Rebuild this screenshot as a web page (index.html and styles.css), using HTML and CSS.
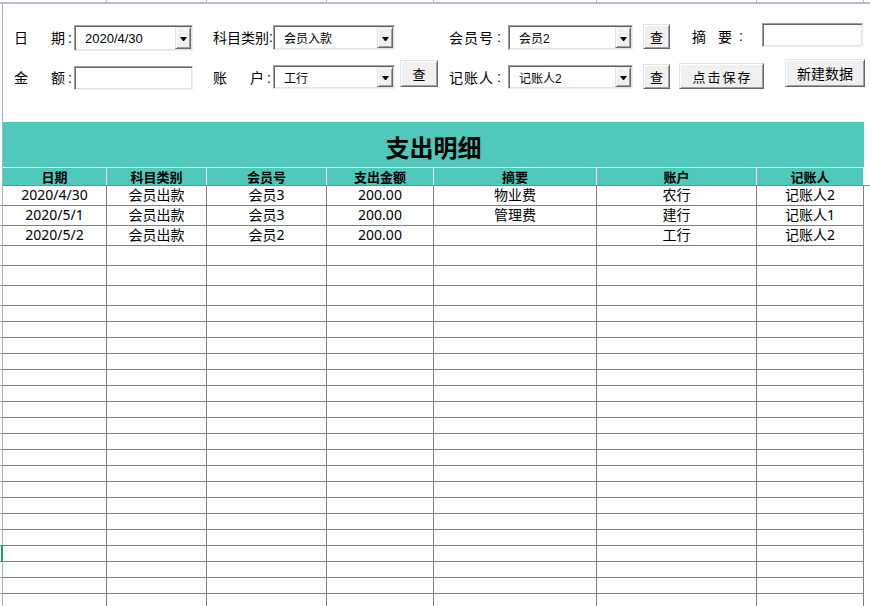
FILE: index.html
```html
<!DOCTYPE html>
<html lang="zh-CN">
<head>
<meta charset="utf-8">
<title>支出明细</title>
<link rel="stylesheet" href="styles.css">
</head>
<body>
<div class="colticks"><span></span><span></span><span></span><span></span><span></span><span></span><span></span></div>
<div class="topline"></div>
<div class="sheet">
  <div class="form">
    <div class="frow r1">
      <div class="lbl l-split ml11 w60 mt2"><span>日</span><span>期<i>:</i></span></div>
      <div class="combo w119 h26 mt2"><span class="val num">2020/4/30</span><span class="drop"></span></div>
      <div class="lbl tight ml20 w60 mt2">科目类别<i>:</i></div>
      <div class="combo w122 h25 mt2"><span class="val">会员入款</span><span class="drop"></span></div>
      <div class="lbl sp ml54 w59 mt2">会员号<i>:</i></div>
      <div class="combo w125 h25 mt2"><span class="val">会员2</span><span class="drop"></span></div>
      <div class="btn ml10 w27 h25 mt1">查</div>
      <div class="lbl l-zy ml22 w70 mt1"><span>摘</span><span class="z2">要</span><i>:</i></div>
      <div class="field w101 h24"></div>
    </div>
    <div class="frow r2">
      <div class="lbl l-split ml11 w60 mt6"><span>金</span><span>额<i>:</i></span></div>
      <div class="field w119 h24 mt7"></div>
      <div class="lbl l-split ml20 w60 mt6"><span>账</span><span>户<i>:</i></span></div>
      <div class="combo w122 h24 mt6"><span class="val">工行</span><span class="drop"></span></div>
      <div class="btn ml5 w38 h27 mt1">查</div>
      <div class="lbl sp ml11 w59 mt6">记账人<i>:</i></div>
      <div class="combo w125 h24 mt6"><span class="val">记账人2</span><span class="drop"></span></div>
      <div class="btn ml10 w27 h25 mt5">查</div>
      <div class="btn save ml9 w85 h26 mt4">点击保存</div>
      <div class="btn big ml21 w80 h28">新建数据</div>
    </div>
  </div>

  <div class="band">支出明细</div>
  <div class="headwrap">
    <div class="grid head">
      <div>日期</div><div>科目类别</div><div>会员号</div><div>支出金额</div><div>摘要</div><div>账户</div><div>记账人</div>
    </div>
  </div>

  <div class="grid row"><div>2020/4/30</div><div>会员出款</div><div>会员3</div><div>200.00</div><div>物业费</div><div>农行</div><div>记账人2</div></div>
  <div class="grid row"><div>2020/5/1</div><div>会员出款</div><div>会员3</div><div>200.00</div><div>管理费</div><div>建行</div><div>记账人1</div></div>
  <div class="grid row"><div>2020/5/2</div><div>会员出款</div><div>会员2</div><div>200.00</div><div></div><div>工行</div><div>记账人2</div></div>
  <div class="grid row"><div></div><div></div><div></div><div></div><div></div><div></div><div></div></div>
  <div class="grid row"><div></div><div></div><div></div><div></div><div></div><div></div><div></div></div>
  <div class="grid row"><div></div><div></div><div></div><div></div><div></div><div></div><div></div></div>
  <div class="grid row s"><div></div><div></div><div></div><div></div><div></div><div></div><div></div></div>
  <div class="grid row s"><div></div><div></div><div></div><div></div><div></div><div></div><div></div></div>
  <div class="grid row s"><div></div><div></div><div></div><div></div><div></div><div></div><div></div></div>
  <div class="grid row s"><div></div><div></div><div></div><div></div><div></div><div></div><div></div></div>
  <div class="grid row s"><div></div><div></div><div></div><div></div><div></div><div></div><div></div></div>
  <div class="grid row s"><div></div><div></div><div></div><div></div><div></div><div></div><div></div></div>
  <div class="grid row s"><div></div><div></div><div></div><div></div><div></div><div></div><div></div></div>
  <div class="grid row s"><div></div><div></div><div></div><div></div><div></div><div></div><div></div></div>
  <div class="grid row s"><div></div><div></div><div></div><div></div><div></div><div></div><div></div></div>
  <div class="grid row s"><div></div><div></div><div></div><div></div><div></div><div></div><div></div></div>
  <div class="grid row s"><div></div><div></div><div></div><div></div><div></div><div></div><div></div></div>
  <div class="grid row s"><div></div><div></div><div></div><div></div><div></div><div></div><div></div></div>
  <div class="grid row s"><div></div><div></div><div></div><div></div><div></div><div></div><div></div></div>
  <div class="grid row s"><div></div><div></div><div></div><div></div><div></div><div></div><div></div></div>
  <div class="grid row s"><div></div><div></div><div></div><div></div><div></div><div></div><div></div></div>
  <div class="grid row s active"><div></div><div></div><div></div><div></div><div></div><div></div><div></div></div>
  <div class="grid row s"><div></div><div></div><div></div><div></div><div></div><div></div><div></div></div>
  <div class="grid row s"><div></div><div></div><div></div><div></div><div></div><div></div><div></div></div>
  <div class="grid row s"><div></div><div></div><div></div><div></div><div></div><div></div><div></div></div>
</div>
</body>
</html>
```

FILE: styles.css
```css
* { box-sizing: border-box; }
html, body {
  margin: 0;
  padding: 0;
  width: 870px;
  height: 606px;
  overflow: hidden;
  background: #fff;
}
body {
  font-family: "Noto Sans CJK SC", "Noto Sans", sans-serif;
  color: #000;
}

/* spreadsheet chrome */
.colticks {
  display: grid;
  grid-template-columns: 104px 100px 120px 107px 163px 160px 107px;
  width: 861px;
  height: 2px;
  margin-left: 3px;
}
.colticks span { border-right: 1px solid #a9b4cc; }
.topline { height: 2px; background: #b3bdd4; }
.sheet {
  margin-left: 2px;
  border-left: 1px solid #a9b4cc;
}

/* form area */
.form { height: 118px; padding-top: 19px; }
.frow { display: flex; align-items: flex-start; }
.r1 { height: 36px; }
.r2 { height: 36px; }

.lbl {
  font-size: 14px;
  line-height: 24px;
  height: 24px;
  white-space: nowrap;
  display: flex;
}
.lbl i {
  font-style: normal;
  font-family: "Liberation Sans", sans-serif;
  margin-left: 3px;
}
.lbl.tight i { margin-left: 0; }
.l-split { justify-content: space-between; padding-right: 2px; }
.sp { letter-spacing: 1px; }
.sp i { margin-left: 3px; letter-spacing: 0; }
.l-zy .z2 { margin-left: 12px; }
.l-zy i { margin-left: 7px; }

.combo, .field {
  display: flex;
  align-items: stretch;
  background: #fff;
  border: 1px solid;
  border-color: #a0a0a0 #f0f0f0 #f0f0f0 #a0a0a0;
  box-shadow: inset 1px 1px #696969, inset -1px -1px #e3e3e3;
  padding: 1px;
}
.combo .val {
  flex: 1;
  display: flex;
  align-items: center;
  padding-left: 9px;
  font-family: "Liberation Sans", "Noto Sans CJK SC", sans-serif;
  font-size: 12px;
  white-space: nowrap;
}
.combo .val.num { font-size: 13px; }
.drop {
  width: 16px;
  background: #f0f0f0;
  border: 1px solid;
  border-color: #e3e3e3 #696969 #696969 #e3e3e3;
  box-shadow: inset 1px 1px #fff, inset -1px -1px #a0a0a0;
  display: flex;
  align-items: center;
  justify-content: center;
  padding-top: 2px;
}
.drop::after {
  content: "";
  width: 1px;
  height: 0;
  border-left: 3px solid transparent;
  border-right: 3px solid transparent;
  border-top: 4px solid #000;
}

.btn {
  display: flex;
  align-items: center;
  justify-content: center;
  background: #f0f0f0;
  border: 1px solid;
  border-color: #e3e3e3 #696969 #696969 #e3e3e3;
  box-shadow: inset 1px 1px #fff, inset -1px -1px #a0a0a0;
  font-size: 13px;
  white-space: nowrap;
}
.btn.save { letter-spacing: 2px; padding-left: 2px; }
.btn.big { font-size: 14px; }

/* sizes & offsets */
.w27 { width: 27px; } .w38 { width: 38px; } .w59 { width: 59px; } .w60 { width: 60px; }
.w70 { width: 70px; } .w80 { width: 80px; } .w85 { width: 85px; } .w101 { width: 101px; }
.w119 { width: 119px; } .w122 { width: 122px; } .w125 { width: 125px; }
.h24 { height: 24px; } .h25 { height: 25px; } .h26 { height: 26px; } .h27 { height: 27px; } .h28 { height: 28px; }
.mt1 { margin-top: 1px; } .mt2 { margin-top: 2px; } .mt4 { margin-top: 4px; } .mt5 { margin-top: 5px; }
.mt6 { margin-top: 6px; } .mt7 { margin-top: 7px; }
.ml5 { margin-left: 5px; } .ml9 { margin-left: 9px; } .ml10 { margin-left: 10px; } .ml11 { margin-left: 11px; }
.ml20 { margin-left: 20px; } .ml21 { margin-left: 21px; } .ml22 { margin-left: 22px; } .ml54 { margin-left: 54px; }

/* table */
.band {
  width: 861px;
  height: 46px;
  background: #4ec9bb;
  border-bottom: 1px solid #fff;
  text-align: center;
  font-size: 24px;
  font-weight: bold;
  line-height: 45px;
  padding-top: 2px;
}
.headwrap { width: 867px; border-bottom: 1px solid #35ac84; }
.grid {
  display: grid;
  grid-template-columns: 104px 100px 120px 107px 163px 160px 107px;
  width: 861px;
}
.head { height: 17px; background: #4ec9bb; }
.head > div {
  border-right: 1px solid #fff;
  font-size: 13px;
  font-weight: bold;
  line-height: 17px;
  text-align: center;
}
.row {
  position: relative;
  height: 20px;
  border-bottom: 1px solid #808080;
}
.row.s { height: 16px; }
.row > div {
  border-right: 1px solid #808080;
  font-family: "Noto Sans", "Noto Sans CJK SC", sans-serif;
  font-size: 14px;
  line-height: 18px;
  text-align: center;
  white-space: nowrap;
}
.row::before {
  content: "";
  position: absolute;
  left: -3px;
  bottom: -1px;
  width: 2px;
  height: 1px;
  background: #9a9a9a;
}
.row.active::after {
  content: "";
  position: absolute;
  left: -2px;
  top: -1px;
  width: 2px;
  height: 17px;
  background: #21a366;
}
```
